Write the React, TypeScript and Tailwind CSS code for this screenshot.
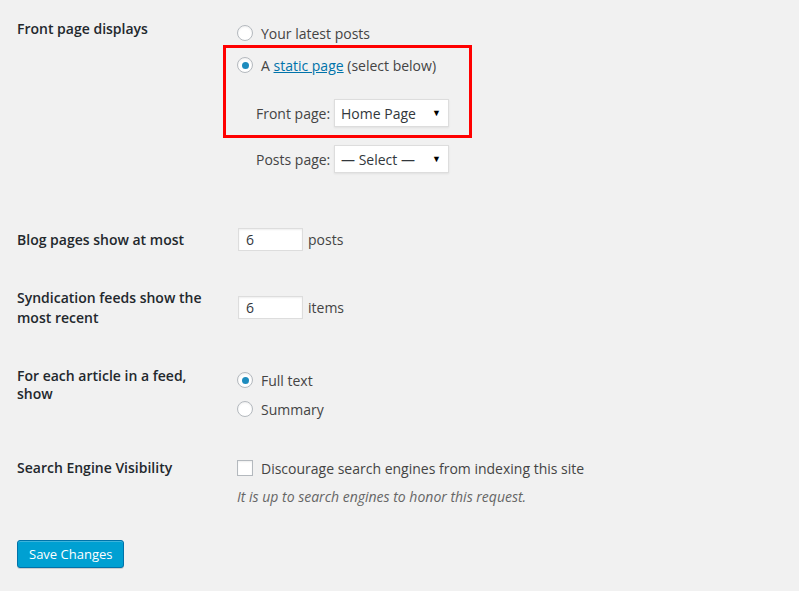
import React from "react";

function Radio({ checked }: { checked?: boolean }) {
  return (
    <span className="flex h-4 w-4 shrink-0 items-center justify-center rounded-full border border-[#b4b9be] bg-white shadow-[inset_0_1px_2px_rgba(0,0,0,0.07)]">
      {checked && <span className="h-[7px] w-[7px] rounded-full bg-[#1e8cbe]" />}
    </span>
  );
}

function FakeSelect({ value }: { value: string }) {
  return (
    <div className="flex h-[28px] w-[115px] items-center justify-between border border-[#ddd] bg-white pl-[6px] pr-[7px] text-[14px] text-[#32373c] shadow-[0_1px_2px_rgba(0,0,0,0.07)]">
      <span>{value}</span>
      <span className="text-[9px] text-black">▼</span>
    </div>
  );
}

function NumberBox({ value }: { value: string }) {
  return (
    <div className="ml-[1px] flex h-[23px] w-[65px] items-center border border-[#ddd] bg-white pl-[7px] text-[14px] text-[#32373c] shadow-[inset_0_1px_2px_rgba(0,0,0,0.07)]">
      {value}
    </div>
  );
}

const labelCls = "w-[200px] mr-[20px] shrink-0 text-[14px] leading-[1.4] font-semibold text-[#23282d]";

export default function App() {
  return (
    <div className="min-h-[591px] w-[799px] bg-[#f1f1f1] pl-[17px] pt-[19px] font-['Open_Sans',sans-serif] text-[14px] text-[#444]">
      {/* Front page displays */}
      <div className="flex items-start">
        <div className={labelCls}>Front page displays</div>
        <div className="relative mt-[4px]">
          <div className="flex h-5 items-center gap-2">
            <Radio />
            <span>Your latest posts</span>
          </div>
          <div className="mt-[12px] flex h-5 items-center gap-2">
            <Radio checked />
            <span>
              A <a className="text-[#0073aa] underline">static page</a> (select below)
            </span>
          </div>
          <div className="mt-[24px] flex items-center pl-[19px]">
            <span className="inline-block w-[78px] whitespace-nowrap">Front page:</span>
            <FakeSelect value="Home Page" />
          </div>
          <div className="mt-[18px] flex items-center pl-[19px]">
            <span className="inline-block w-[78px] whitespace-nowrap">Posts page:</span>
            <FakeSelect value="— Select —" />
          </div>
          <div className="pointer-events-none absolute left-[-14px] top-[22px] h-[93px] w-[249px] border-[3px] border-[#ff0000]" />
        </div>
      </div>

      {/* Blog pages */}
      <div className="mt-[55px] flex h-[23px] items-center">
        <div className={labelCls}>Blog pages show at most</div>
        <div className="flex items-center gap-[5px]">
          <NumberBox value="6" />
          <span>posts</span>
        </div>
      </div>

      {/* Syndication */}
      <div className="mt-[37px] flex items-start">
        <div className={labelCls}>Syndication feeds show the most recent</div>
        <div className="mt-[8px] flex items-center gap-[5px]">
          <NumberBox value="6" />
          <span>items</span>
        </div>
      </div>

      {/* Feed article */}
      <div className="mt-[40px] flex items-start">
        <div className="w-[200px] mr-[20px] shrink-0 text-[14px] leading-[1.3] font-semibold text-[#23282d]">
          For each article in a feed, show
        </div>
        <div className="mt-[3px]">
          <div className="flex h-5 items-center gap-2">
            <Radio checked />
            <span>Full text</span>
          </div>
          <div className="mt-[9px] flex h-5 items-center gap-2">
            <Radio />
            <span>Summary</span>
          </div>
        </div>
      </div>

      {/* Search engine */}
      <div className="mt-[39px] flex items-start">
        <div className={labelCls}>Search Engine Visibility</div>
        <div>
          <div className="flex h-5 items-center gap-2">
            <span className="h-4 w-4 shrink-0 border border-[#b4b9be] bg-white shadow-[inset_0_1px_2px_rgba(0,0,0,0.07)]" />
            <span>Discourage search engines from indexing this site</span>
          </div>
          <p className="mt-[9px] h-5 text-[14px] italic leading-5 text-[#666]">
            It is up to search engines to honor this request.
          </p>
        </div>
      </div>

      <button className="mt-[33px] h-[28px] rounded-[3px] border border-[#0073aa] bg-[#00a0d2] px-[11px] text-[13px] leading-[26px] text-white shadow-[inset_0_1px_0_rgba(120,200,230,0.5),0_1px_0_rgba(0,0,0,0.15)]">
        Save Changes
      </button>
    </div>
  );
}
